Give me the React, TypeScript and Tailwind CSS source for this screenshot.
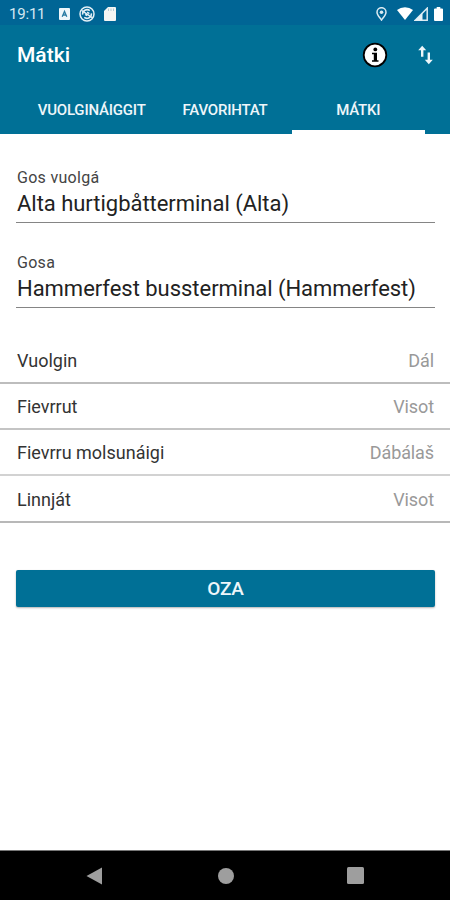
const tabs = [
  { label: "VUOLGINÁIGGIT", active: false },
  { label: "FAVORIHTAT", active: false },
  { label: "MÁTKI", active: true },
];

const fields = [
  { label: "Gos vuolgá", value: "Alta hurtigbåtterminal (Alta)" },
  { label: "Gosa", value: "Hammerfest bussterminal (Hammerfest)" },
];

const options = [
  { label: "Vuolgin", value: "Dál", border: "border-[#bdbdbd]" },
  { label: "Fievrrut", value: "Visot", border: "border-[#c4c4c4]" },
  { label: "Fievrru molsunáigi", value: "Dábálaš", border: "border-[#d2d2d2]" },
  { label: "Linnját", value: "Visot", border: "border-[#b8b8b8]" },
];

const StatusBar = () => (
  <div className="flex h-[25px] items-center justify-between bg-[#006595] pl-[9px] pr-[7px] text-white">
    <div className="flex items-center pt-[2px]">
      <span className="w-[50px] text-[15px] leading-[18px] tracking-[-0.2px] text-[#d5e8f1]">19:11</span>
      <svg className="h-[12px] w-[11px]" viewBox="0 0 11 12">
        <rect width="11" height="12" rx="1" fill="#eef6fa" />
        <path d="M3.2 8.8 5.5 3.4 7.8 8.8M4 7h3" fill="none" stroke="#2a7ba3" strokeWidth="1.3" />
      </svg>
      <svg className="ml-[9px] h-[16px] w-[16px]" viewBox="0 0 16 16" fill="none" stroke="#e4f0f6">
        <circle cx="8" cy="8" r="7" strokeWidth="1.5" />
        <path d="M3.6 8.6A4.5 4.5 0 0 1 10.8 4.6M12.4 7.4A4.5 4.5 0 0 1 5.2 11.4" strokeWidth="1.5" />
        <path d="M3 4.6 13 11.6M6.2 8.4 8 9.8M8.2 6.2 10.4 7.6" strokeWidth="1.4" />
      </svg>
      <svg className="ml-[9px] h-[14px] w-[12px]" viewBox="0 0 12 14">
        <path d="M4 0h7a1 1 0 0 1 1 1v12a1 1 0 0 1-1 1H1a1 1 0 0 1-1-1V4z" fill="#f4f5f3" />
        <path d="M4.5 1.5v2.500M7 1.5v2.500M9.5 1.5v2.500" stroke="#b5cad3" strokeWidth="1" />
      </svg>
    </div>
    <div className="flex items-center pt-[2px]">
      <svg className="h-[14px] w-[11px]" viewBox="0 0 11 14">
        <path d="M5.5 13C3.5 10.2 1 7.9 1 5.2a4.5 4.5 0 0 1 9 0c0 2.7-2.5 5-4.5 7.8z" fill="none" stroke="#dcebf2" strokeWidth="1.5" />
        <circle cx="5.5" cy="5.2" r="1.8" fill="#dcebf2" />
      </svg>
      <svg className="ml-[10px] h-[13px] w-[16px]" viewBox="0 0 16 13">
        <path d="M8 13 0 3a13 13 0 0 1 16 0z" fill="white" />
      </svg>
      <svg className="ml-[1px] h-[14px] w-[14px]" viewBox="0 0 14 14">
        <path d="M1.2 13.2 13.2 1.2v12z" fill="none" stroke="#dcebf2" strokeWidth="1.5" />
        <path d="M1 13.4 8.5 6v7.4z" fill="#e8f2f7" />
      </svg>
      <svg className="ml-[6px] h-[14px] w-[9px]" viewBox="0 0 9 14">
        <path d="M2.7 0h3.6v1.5H8a1 1 0 0 1 1 1V13a1 1 0 0 1-1 1H1a1 1 0 0 1-1-1V2.5a1 1 0 0 1 1-1h1.7z" fill="white" />
      </svg>
    </div>
  </div>
);

const AppBar = () => (
  <div className="flex h-[60px] items-center justify-between px-[17px]">
    <h1 className="text-[21px] font-medium leading-6 text-white">Mátki</h1>
    <div className="flex items-center">
      <svg className="h-[26px] w-[26px]" viewBox="0 0 26 26">
        <circle cx="13" cy="13" r="11.3" fill="white" stroke="black" strokeWidth="1.8" />
        <circle cx="13.3" cy="7.4" r="1.9" fill="black" />
        <path d="M10 10.8h5v7.400h1.500v1.500h-6.500v-1.500h1.800v-5.900H10z" fill="black" />
      </svg>
      <svg className="ml-[30px] h-[20px] w-[15px]" viewBox="0 0 15 20" fill="#edf6fa">
        <path d="M4.2.8 8.2 5.2H5.4v6.6H3V5.2H.2zM10.8 19.2l-4-4.4h2.8V7.6H12v7.2h2.8z" />
      </svg>
    </div>
  </div>
);

export default function App() {
  return (
    <div className="flex h-[900px] w-[450px] flex-col overflow-hidden bg-white font-[Roboto,sans-serif]">
      <header className="h-[133.5px] shrink-0 bg-[#007096]">
        <StatusBar />
        <AppBar />
        <nav className="flex h-[48.5px] px-[25px]">
          {tabs.map((tab) => (
            <div key={tab.label} className="flex flex-1 flex-col">
              <div className="flex flex-1 items-center justify-center pt-[5.5px] text-[15px] font-medium tracking-[-0.2px] text-[#eef6fa]">
                {tab.label}
              </div>
              <div className={tab.active ? "h-[3.5px] bg-white" : "h-[3.5px]"} />
            </div>
          ))}
        </nav>
      </header>

      <main className="flex-1">
        <div className="pl-4 pr-[15px] pt-[33.5px]">
          {fields.map((field) => (
            <div key={field.label} className="mb-[29px] h-[56px] border-b border-[#858585] pl-px">
              <div className="h-[21px] text-[16px] leading-[21px] tracking-[0.3px] text-[#444]">{field.label}</div>
              <div className="whitespace-nowrap text-[22px] leading-[31px] tracking-[-0.03px] text-[#222]">
                {field.value}
              </div>
            </div>
          ))}
        </div>

        <div className="pt-[0.5px]">
          {options.map((option) => (
            <div
              key={option.label}
              className={`flex h-[46.3px] items-center justify-between border-b-2 pl-[17px] pr-4 pt-[2px] text-[18px] leading-6 ${option.border}`}
            >
              <span className="text-[#333]">{option.label}</span>
              <span className="tracking-[-0.1px] text-[#999]">{option.value}</span>
            </div>
          ))}
        </div>

        <div className="pl-4 pr-[15px] pt-[47px]">
          <button className="h-[37px] w-full rounded-[2px] bg-[#007096] pt-[3px] text-[19px] font-medium tracking-[-0.2px] text-[#eef6fa] shadow-[0_1px_2px_rgba(0,0,0,0.3)]">
            OZA
          </button>
        </div>
      </main>

      <footer className="flex h-[50px] shrink-0 items-center border-t border-[#777] bg-black">
        <svg className="ml-[86px] h-[18px] w-[17px]" viewBox="0 0 17 18">
          <path d="M.5 9 16 .5v17z" fill="#9e9e9e" />
        </svg>
        <div className="ml-[114.5px] h-4 w-4 rounded-full bg-[#9e9e9e]" />
        <div className="ml-[113.5px] h-[17px] w-[17px] rounded-[1.5px] bg-[#9e9e9e]" />
      </footer>
    </div>
  );
}
